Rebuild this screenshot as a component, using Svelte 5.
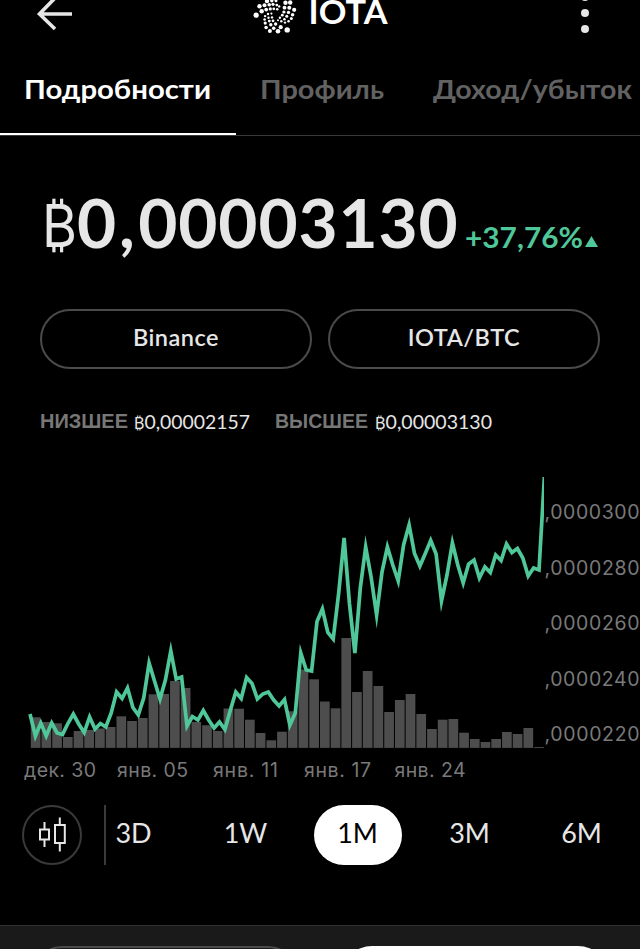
<script>
  const tabs = [
    { label: 'Подробности', width: 187, active: true },
    { label: 'Профиль', width: 124 },
    { label: 'Доход/убыток', width: 199 }
  ];
  const periods = ['3D', '1W', '1M', '3M', '6M'];
  const selected = '1M';

  const prices = [
    714, 736, 723, 736, 723, 733, 734.5, 723.5, 714, 724, 732.5, 717, 729, 723.5, 727, 713,
    692, 698.5, 688, 707.5, 715, 698, 663, 681, 699, 680, 651, 679, 677, 726, 716.5, 720,
    710.5, 720, 728, 722, 729.5, 710, 692, 698.5, 677.5, 683.5, 699, 694, 692, 700, 706, 699.5,
    725, 713, 653, 670, 671, 621.5, 609, 632.5, 639, 593, 538, 604, 653, 588, 547, 577,
    615, 572, 547, 565, 581, 545, 525, 553.5, 566, 553.5, 540.5, 554, 601, 575, 543, 565,
    583, 564, 560, 578, 567, 572.5, 555, 560.5, 544, 552.5, 548.5, 558, 576, 568, 570, 477
  ];
  const volumeTops = [
    717.3, 722, 723.3, 737, 731, 730, 728.5, 727, 716.3, 721, 718, 694.3, 694, 681, 688, 722,
    725.3, 731, 708.5, 708.7, 719.7, 733, 740.3, 731.7, 711.3, 669.5, 679.3, 701.5, 708.3, 638,
    692, 671, 686, 712, 700, 694, 714, 729, 719.7, 719, 732.7, 739, 742, 739, 732, 734, 728, 747
  ];
  const top = 450;
  const line = prices.map((y, i) => `${(30 + i * 5.415).toFixed(1)},${y - top}`).join(' ');

  const yLabels = [300, 280, 260, 240, 220];
  const xLabels = [
    ['дек. 30', 24, 72],
    ['янв. 05', 117, 71],
    ['янв. 11', 213, 65],
    ['янв. 17', 304, 67],
    ['янв. 24', 394.5, 71]
  ];

  // Rings of dots spiralling out of the logo centre: [x, y, r]
  const dots = [
    [16.1, 15.2, 2.6], [19.5, 6.3, 2.2], [21.7, 11.3, 2.2], [24.5, 5.2, 2], [27, 1.2, 2.1],
    [26.2, 9.6, 1.9], [29.2, 4.8, 1.8], [30.3, 8.9, 1.6], [33, 4.3, 1.6], [33.8, 8.8, 1.4],
    [31.8, 0.7, 1.7], [36.8, 5.1, 1.4], [37.2, 9.2, 1.3], [36, 0.8, 1.5], [39.2, 6.4, 1.2],
    [45.5, 2.8, 2.2], [50.2, 2.5, 2.2], [44.5, 7.7, 1.9], [49.3, 7.8, 2], [54.2, 9.8, 2.1],
    [43.9, 12, 1.6], [48.5, 12.4, 1.7], [52.6, 14.7, 1.8], [42.3, 15.2, 1.4], [46.8, 16.2, 1.5],
    [51.3, 18.6, 1.5], [39.9, 17.8, 1.2], [44.4, 19.2, 1.3], [48.6, 21.2, 1.3],
    [38, 20.2, 1], [41.3, 21.3, 1.2], [45, 22.6, 1.2], [25.1, 16.1, 1.2], [28, 14, 1.2],
    [24.6, 19.5, 1.3], [28.5, 17.8, 1.2], [31.4, 13.6, 1.1], [32, 17.4, 1.2], [25.2, 23.1, 1.6],
    [29.3, 21.1, 1.4], [33, 20.8, 1.4], [26.1, 27.5, 1.8], [30.8, 24.7, 1.7], [35.6, 24, 1.7],
    [29.9, 30.9, 2], [33.7, 28.2, 1.8], [40.7, 27.2, 2.1], [38, 31.2, 2.3], [47.2, 29.9, 2.7]
  ];
</script>

<main>
  <header>
    <svg class="back" width="40" height="32" viewBox="0 0 40 32">
      <path d="M20 -2 4.5 14 20 29M4 14H37" fill="none" stroke="#e6e6e6" stroke-width="3.6" />
    </svg>
    <div class="brand">
      <svg width="60" height="36" viewBox="0 0 60 36" fill="#fff">
        {#each dots as [x, y, r]}
          <circle cx={x} cy={y} {r} />
        {/each}
      </svg>
      <svg width="90" height="36">
        <text x="8.5" y="23.5" textLength="79" lengthAdjust="spacingAndGlyphs">IOTA</text>
      </svg>
    </div>
    <svg class="more" width="10" height="36" viewBox="0 0 10 36" fill="#e6e6e6">
      <circle cx="5" cy="-3" r="4" /><circle cx="5" cy="13" r="4" /><circle cx="5" cy="29" r="4" />
    </svg>
  </header>

  <nav>
    {#each tabs as tab}
      <div class="tab" class:active={tab.active}>
        <svg width={tab.width} height="44">
          <text x="0" y="33" textLength={tab.width} lengthAdjust="spacingAndGlyphs">{tab.label}</text>
        </svg>
      </div>
    {/each}
  </nav>

  <section class="price">
    <svg width="560" height="90">
      <text class="coin" x="2" y="61" textLength="35" lengthAdjust="spacingAndGlyphs">₿</text>
      <text class="amount" x="37" y="62" dx="0 2 2.5">0,00003130</text>
      <text class="change" x="425" y="61.5" textLength="118" lengthAdjust="spacingAndGlyphs">+37,76%</text>
      <path d="M545 61 551.5 50 558 61Z" fill="#4fc799" />
    </svg>
  </section>

  <div class="buttons">
    <button>Binance</button>
    <button>IOTA/BTC</button>
  </div>

  <section class="range">
    <svg width="460" height="30">
      <text class="key" x="0" y="18.5" textLength="88" lengthAdjust="spacingAndGlyphs">НИЗШЕЕ</text>
      <text class="val" x="94" y="20" textLength="116" lengthAdjust="spacingAndGlyphs"><tspan class="unit">₿</tspan>0,00002157</text>
      <text class="key" x="235" y="18.5" textLength="93" lengthAdjust="spacingAndGlyphs">ВЫСШЕЕ</text>
      <text class="val" x="335" y="20" textLength="117" lengthAdjust="spacingAndGlyphs"><tspan class="unit">₿</tspan>0,00003130</text>
    </svg>
  </section>

  <svg class="chart" width="640" height="340" viewBox="0 0 640 340">
    <defs><clipPath id="plot"><rect x="0" y="27" width="544" height="313" /></clipPath></defs>
    {#each volumeTops as y, i}
      <rect x={30.8 + i * 10.71} y={y - top} width="9.7" height={747.9 - y} fill="#4d4d4d" />
    {/each}
    <polyline points={line} clip-path="url(#plot)" fill="none" stroke="#4fc799" stroke-width="3.7" stroke-miterlimit="10" />
    {#each yLabels as label, i}
      <text x="544.5" y={69 + i * 55.5} textLength="95" lengthAdjust="spacing">,0000{label}</text>
    {/each}
    {#each xLabels as [label, x, width]}
      <text {x} y="326.6" textLength={width} lengthAdjust="spacing">{label}</text>
    {/each}
  </svg>

  <div class="periods">
    <div class="candles">
      <svg width="30" height="40" viewBox="0 0 30 40" fill="none" stroke="#e6e6e6" stroke-width="2">
        <rect x="3" y="14.5" width="9" height="10" /><path d="M7.5 7v7.5M7.5 24.5V32" />
        <rect x="18" y="10" width="9.8" height="18" /><path d="M22.8 2.5v7.5M22.8 28V36.5" />
      </svg>
    </div>
    <div class="list">
      {#each periods as p}
        <span class:selected={p === selected}>{p}</span>
      {/each}
    </div>
  </div>

  <footer>
    <div class="outline"></div>
    <div class="solid"></div>
  </footer>
</main>

<style>
  :global(body) { background: #000; }
  main {
    width: 640px; height: 949px; overflow: hidden; background: #000; color: #e6e6e6;
    font-family: Lato, 'Open Sans', sans-serif; display: flex; flex-direction: column;
  }
  svg { display: block; flex: none; overflow: visible; }
  header {
    box-sizing: border-box; height: 60px; padding: 0 50px 0 35px;
    display: flex; align-items: flex-start;
  }
  .brand { display: flex; margin-left: 165px; }
  .brand text { font-size: 32px; font-weight: 700; fill: #fff; }
  .more { margin-left: auto; }
  nav { height: 76px; box-sizing: border-box; border-bottom: 1px solid #383838; display: flex; }
  .tab { box-sizing: border-box; height: 75px; padding: 6px 25px 0 24px; border-bottom: 2px solid transparent; flex: none; }
  .tab.active { border-color: #fff; }
  .tab text { font-size: 27.5px; font-weight: 700; fill: #626262; }
  .tab.active text { fill: #fff; }
  .price { box-sizing: border-box; height: 173px; padding: 50px 40px 0; }
  .coin { font: 400 59px Inter, sans-serif; fill: #e6e6e6; }
  .amount { font-size: 67.5px; font-weight: 700; letter-spacing: 0.9px; fill: #e6e6e6; }
  .change { font-size: 28px; font-weight: 700; fill: #4fc799; }
  .buttons { display: flex; gap: 16px; padding: 0 40px; height: 60px; }
  button {
    flex: 1; border: 2px solid #4b4b4b; border-radius: 30px; background: none; color: #e6e6e6;
    font: 600 23.5px Lato, sans-serif; padding: 0 0 4px; letter-spacing: 0.5px;
  }
  .range { box-sizing: border-box; height: 81px; padding: 40px 40px 0; }
  .key { font: 700 19.5px 'Liberation Sans', sans-serif; fill: #777; }
  .val { font: 400 20px Lato, Inter, sans-serif; fill: #e6e6e6; }
  .unit { font: 400 16.5px Inter, sans-serif; }
  .chart text { font: 400 19.5px Inter, sans-serif; fill: #797979; }
  .periods { height: 60px; margin-top: 15px; display: flex; padding-left: 22px; flex: none; }
  .candles {
    box-sizing: border-box; width: 60px; height: 60px; border: 2px solid #3a3a3a; border-radius: 50%;
    display: flex; align-items: center; justify-content: center;
  }
  .list { margin-left: 22px; border-left: 2px solid #3a3a3a; display: flex; gap: 24px; }
  .list span {
    box-sizing: border-box; width: 88px; height: 60px; padding-right: 1px; line-height: 56px;
    text-align: center; border-radius: 30px; font-size: 27px;
  }
  .list span:first-child { margin-left: -16px; }
  .list .selected { background: #fff; color: #000; }
  footer {
    box-sizing: border-box; height: 24px; margin-top: 60px; background: #1a1a1a; border-top: 1px solid #333;
    display: flex; justify-content: space-between; padding: 20px 32px 0; overflow: hidden; flex: none;
  }
  footer div { box-sizing: border-box; width: 266px; height: 60px; border-radius: 30px; flex: none; }
  .outline { border: 2px solid #4b4b4b; }
  .solid { background: #fff; }
</style>
